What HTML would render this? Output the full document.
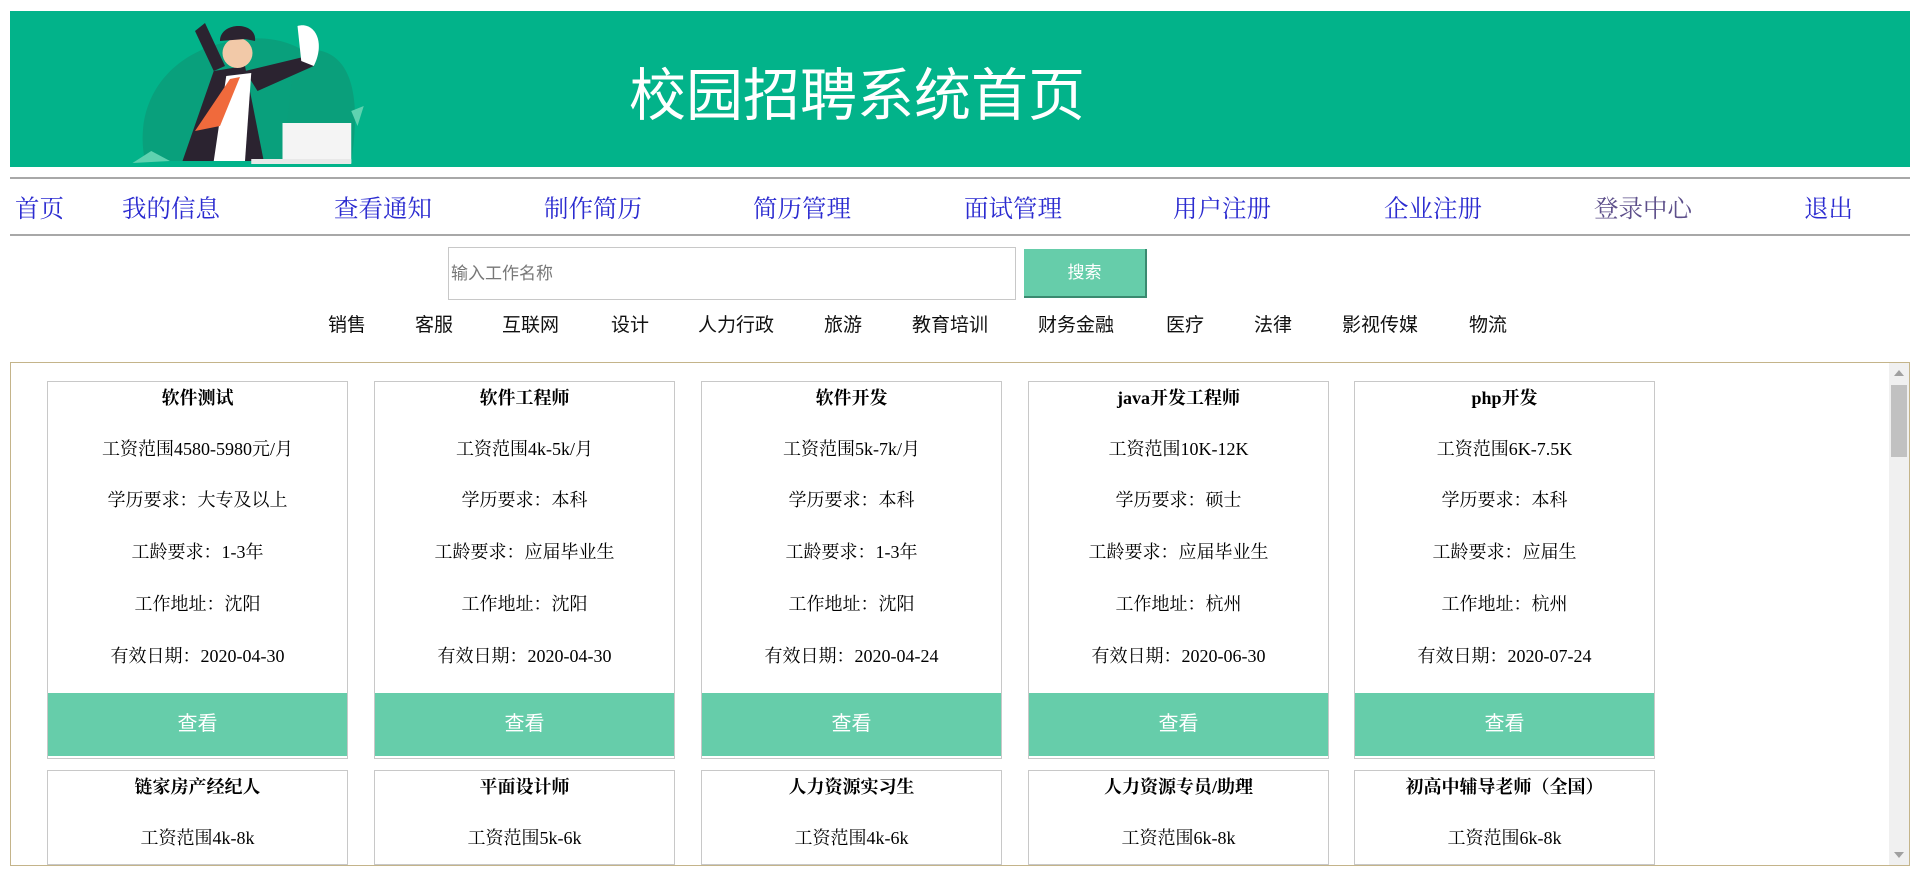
<!DOCTYPE html>
<html><head><meta charset="utf-8"><style>
*{margin:0;padding:0;box-sizing:border-box}
html,body{width:1920px;height:891px;overflow:hidden}
body{background:#fff;position:relative;font-family:"Liberation Serif","Noto Serif CJK SC",serif}
.banner{position:absolute;left:10px;top:11px;width:1900px;height:156px;background:#02b38a;overflow:hidden}
.title{position:absolute;left:619px;top:57px;font-family:"Liberation Sans","Noto Sans CJK SC",sans-serif;font-size:57px;color:#fff;line-height:1;white-space:nowrap}
.hr{position:absolute;left:10px;width:1900px;height:2px;background:#a8a8a8}
.nav{position:absolute;top:196px;font-size:24.5px;color:#2b2bd0;white-space:nowrap;line-height:28px}
.search{position:absolute;left:448px;top:247px;width:568px;height:53px;border:1px solid #c8c8c8;font-family:"Liberation Sans","Noto Sans CJK SC",sans-serif;font-size:17px;color:#777;line-height:51px;padding-left:2px}
.btn{position:absolute;left:1024px;top:249px;width:123px;height:49px;background:#66cdaa;border-bottom:2px solid #3a8a70;border-right:2px solid #3a8a70;color:#fff;font-family:"Liberation Sans","Noto Sans CJK SC",sans-serif;font-size:17px;text-align:center;line-height:47px}
.cat{position:absolute;top:313px;font-family:"Liberation Sans","Noto Sans CJK SC",sans-serif;font-size:19px;color:#111;white-space:nowrap;line-height:26px}
.panel{position:absolute;left:10px;top:362px;width:1900px;height:504px;border:1px solid #c4b48a;overflow:hidden}
.sb{position:absolute;right:0;top:0;width:20px;height:502px;background:#f0f0f0}
.thumb{position:absolute;right:2px;top:22px;width:16px;height:72px;background:#c1c1c1}
.card{position:absolute;width:301px;height:378px;border:1px solid #c8c8c8;text-align:center;font-size:18px;color:#000}
.card p{position:absolute;left:0;right:0;line-height:24px;white-space:nowrap}
.card .t{font-weight:bold}
.card .b{position:absolute;left:0;right:0;top:311px;height:63px;background:#66cdaa;color:#fff;font-family:"Liberation Sans","Noto Sans CJK SC",sans-serif;font-size:20px;line-height:63px}
</style></head><body>
<div class="banner">
<svg width="300" height="156" viewBox="0 0 240 156" preserveAspectRatio="none" style="position:absolute;left:85px;top:0">
<path d="M40 150 C30 90 60 40 110 30 C150 20 170 40 190 60 L200 150 Z" fill="#09a07c"/>
<path d="M160 40 C200 30 215 70 205 150 L150 150 Z" fill="#0a9f7b"/>
<path d="M45 140 L60 150 L30 152 Z" fill="#5fd2b0"/>
<path d="M70 150 L95 60 L120 55 L135 150 Z" fill="#2b2330"/>
<path d="M95 60 L80 20 L88 12 L104 55 Z" fill="#2b2330"/>
<path d="M120 60 L170 45 L175 55 L130 80 Z" fill="#2b2330"/>
<path d="M105 65 L125 62 L120 150 L95 150 Z" fill="#fff"/>
<path d="M108 68 L116 66 L100 115 L80 120 Z" fill="#f06a3c"/>
<ellipse cx="114" cy="42" rx="12" ry="15" fill="#f2c9a8"/>
<path d="M100 30 C100 10 130 10 128 30 L120 28 Z" fill="#2b2330"/>
<path d="M162 15 C175 10 185 30 175 55 L165 50 Z" fill="#fff"/>
<rect x="150" y="112" width="55" height="40" fill="#f4f4f4"/>
<rect x="125" y="148" width="80" height="5" fill="#e8e8e8"/>
<path d="M205 100 L215 95 L210 115 Z" fill="#5fd2b0"/>
</svg>
<div class="title">校园招聘系统首页</div>
</div>
<div class="hr" style="top:177px"></div>
<div class="hr" style="top:234px"></div>
<div class="nav" style="left:15px">首页</div>
<div class="nav" style="left:122px">我的信息</div>
<div class="nav" style="left:334px">查看通知</div>
<div class="nav" style="left:544px">制作简历</div>
<div class="nav" style="left:753px">简历管理</div>
<div class="nav" style="left:964px">面试管理</div>
<div class="nav" style="left:1173px">用户注册</div>
<div class="nav" style="left:1384px">企业注册</div>
<div class="nav" style="left:1594px;color:#5d4f8a">登录中心</div>
<div class="nav" style="left:1804px">退出</div>
<div class="search">输入工作名称</div>
<div class="btn">搜索</div>
<div class="cat" style="left:328px">销售</div>
<div class="cat" style="left:415px">客服</div>
<div class="cat" style="left:502px">互联网</div>
<div class="cat" style="left:611px">设计</div>
<div class="cat" style="left:698px">人力行政</div>
<div class="cat" style="left:824px">旅游</div>
<div class="cat" style="left:912px">教育培训</div>
<div class="cat" style="left:1038px">财务金融</div>
<div class="cat" style="left:1166px">医疗</div>
<div class="cat" style="left:1254px">法律</div>
<div class="cat" style="left:1342px">影视传媒</div>
<div class="cat" style="left:1469px">物流</div>
<div class="panel">
<div class="card" style="left:36px;top:18px"><p class="t" style="top:4px">软件测试</p><p style="top:55px">工资范围4580-5980元/月</p><p style="top:106px">学历要求：大专及以上</p><p style="top:158px">工龄要求：1-3年</p><p style="top:210px">工作地址：沈阳</p><p style="top:262px">有效日期：2020-04-30</p><div class="b">查看</div></div>
<div class="card" style="left:363px;top:18px"><p class="t" style="top:4px">软件工程师</p><p style="top:55px">工资范围4k-5k/月</p><p style="top:106px">学历要求：本科</p><p style="top:158px">工龄要求：应届毕业生</p><p style="top:210px">工作地址：沈阳</p><p style="top:262px">有效日期：2020-04-30</p><div class="b">查看</div></div>
<div class="card" style="left:690px;top:18px"><p class="t" style="top:4px">软件开发</p><p style="top:55px">工资范围5k-7k/月</p><p style="top:106px">学历要求：本科</p><p style="top:158px">工龄要求：1-3年</p><p style="top:210px">工作地址：沈阳</p><p style="top:262px">有效日期：2020-04-24</p><div class="b">查看</div></div>
<div class="card" style="left:1017px;top:18px"><p class="t" style="top:4px">java开发工程师</p><p style="top:55px">工资范围10K-12K</p><p style="top:106px">学历要求：硕士</p><p style="top:158px">工龄要求：应届毕业生</p><p style="top:210px">工作地址：杭州</p><p style="top:262px">有效日期：2020-06-30</p><div class="b">查看</div></div>
<div class="card" style="left:1343px;top:18px"><p class="t" style="top:4px">php开发</p><p style="top:55px">工资范围6K-7.5K</p><p style="top:106px">学历要求：本科</p><p style="top:158px">工龄要求：应届生</p><p style="top:210px">工作地址：杭州</p><p style="top:262px">有效日期：2020-07-24</p><div class="b">查看</div></div>
<div class="card" style="left:36px;top:407px;height:95px"><p class="t" style="top:4px">链家房产经纪人</p><p style="top:55px">工资范围4k-8k</p></div>
<div class="card" style="left:363px;top:407px;height:95px"><p class="t" style="top:4px">平面设计师</p><p style="top:55px">工资范围5k-6k</p></div>
<div class="card" style="left:690px;top:407px;height:95px"><p class="t" style="top:4px">人力资源实习生</p><p style="top:55px">工资范围4k-6k</p></div>
<div class="card" style="left:1017px;top:407px;height:95px"><p class="t" style="top:4px">人力资源专员/助理</p><p style="top:55px">工资范围6k-8k</p></div>
<div class="card" style="left:1343px;top:407px;height:95px"><p class="t" style="top:4px">初高中辅导老师（全国）</p><p style="top:55px">工资范围6k-8k</p></div>
<div class="sb"><div style="position:absolute;left:5px;top:7px;border-left:5px solid transparent;border-right:5px solid transparent;border-bottom:6px solid #a0a0a0"></div><div class="thumb"></div><div style="position:absolute;left:5px;bottom:7px;border-left:5px solid transparent;border-right:5px solid transparent;border-top:6px solid #a0a0a0"></div></div>
</div>
</body></html>
